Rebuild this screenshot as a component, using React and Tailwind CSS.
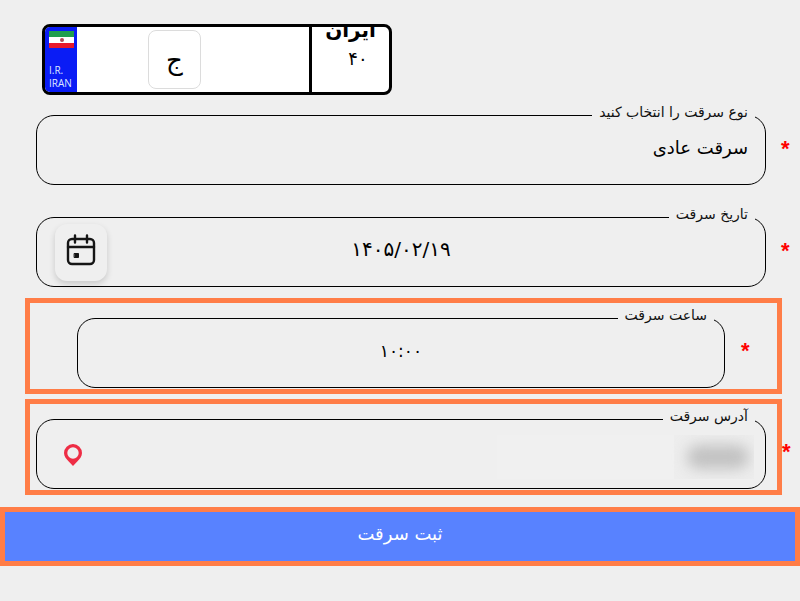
import React from 'react';

const FONT = "font-['DejaVu_Sans',sans-serif]";

function Star({ className = '' }) {
  return <span className={`font-['Liberation_Sans',sans-serif] font-bold text-[22px] leading-none text-[#ff0000] ${className}`}>*</span>;
}

function Field({ label, className = '', children }) {
  return (
    <fieldset dir="rtl" className={`border border-black rounded-[18px] min-w-0 ${className}`}>
      <legend className="ml-0 mr-[10px] px-[7px] h-5 text-[14px] leading-[14px] text-[#111]">{label}</legend>
      {children}
    </fieldset>
  );
}

function Plate() {
  return (
    <div dir="ltr" className="ml-[42px] w-[350px] h-[71px] flex overflow-hidden rounded-lg border-[3px] border-black bg-white">
      <div className="w-[32px] shrink-0 bg-[#0a1cf5] flex flex-col pl-[4px] pt-[4px]">
        <div className="w-[25px] h-[17px] flex flex-col">
          <div className="h-[6px] bg-[#1f9e4d]" />
          <div className="h-[6px] bg-white flex justify-center items-center">
            <div className="w-[4px] h-[4px] rounded-full bg-[#b04a55]" />
          </div>
          <div className="h-[5px] bg-[#e8192c]" />
        </div>
        <div className="mt-[16px] font-['Open_Sans',sans-serif] text-[10px] leading-[13px] text-[#dfe6ff]">
          <div>I.R.</div>
          <div>IRAN</div>
        </div>
      </div>
      <div className="w-[232px] shrink-0 pl-[71px] pt-[3px]">
        <div className="w-[53px] h-[59px] flex items-center justify-center rounded-lg border border-[#dcdcdc] bg-white pt-[2px] text-[26px] text-black">
          ج
        </div>
      </div>
      <div className="flex-1 border-l-[3px] border-black flex flex-col items-center overflow-hidden">
        <div className="-mt-[9px] h-[24px] font-bold text-[20px] leading-6 tracking-[5px] text-black">ایران</div>
        <div className="mt-[7px] pl-[15px] text-[18px] leading-5 text-black">۴۰</div>
      </div>
    </div>
  );
}

function CalendarIcon() {
  return (
    <svg width="30" height="32" viewBox="0 0 30 32" fill="none" stroke="#151515" strokeWidth="2.4" strokeLinecap="round" strokeLinejoin="round">
      <rect x="2" y="5" width="26" height="25" rx="4" />
      <path d="M2 13h26M9 1.500v7M21 1.500v7" />
      <rect x="8.500" y="19.500" width="4" height="4" fill="#151515" strokeWidth="1" />
    </svg>
  );
}

function PinIcon() {
  return (
    <svg width="20" height="24" viewBox="0 0 20 24" className="mt-[14px] shrink-0">
      <path
        fillRule="evenodd"
        fill="#ee2d45"
        d="M10 1a9 9 0 0 1 9 9c0 3.600-2.500 6.200-4.500 8.300L10 23l-4.500-4.700C3.500 16.200 1 13.600 1 10a9 9 0 0 1 9-9zm0 3.300a5.700 5.700 0 1 0 0 11.400a5.700 5.700 0 0 0 0-11.400z"
      />
    </svg>
  );
}

export default function App() {
  return (
    <div className={`${FONT} w-[800px] h-[601px] overflow-hidden bg-[#efefef] pt-[24px]`}>
      <Plate />

      <div className="mt-[10px] flex items-center pl-[36px]">
        <Field label="نوع سرقت را انتخاب کنید" className="w-[730px] h-[80px]">
          <div className="pr-[17px] pt-[9px] text-[18px] leading-7 text-black">سرقت عادی</div>
        </Field>
        <Star className="ml-[15px] mt-[8px]" />
      </div>

      <div className="mt-[22px] flex items-center pl-[36px]">
        <Field label="تاریخ سرقت" className="w-[730px] h-[80px]">
          <div dir="ltr" className="flex items-start pl-[18px]">
            <div className="w-[52px] h-[57px] -mt-[3px] pb-[5px] shrink-0 flex items-center justify-center rounded-xl bg-[#efefef] shadow-[0_3px_6px_rgba(0,0,0,0.16)]">
              <CalendarIcon />
            </div>
            <div className="flex-1 pr-[70px] pt-[8px] text-center text-[20px] leading-7 text-black">۱۴۰۵/۰۲/۱۹</div>
          </div>
        </Field>
        <Star className="ml-[15px] mt-[8px]" />
      </div>

      <div className="mt-[11px] ml-[25px] w-[757px] h-[96px] flex items-start border-[5px] border-[#ff7d47] pt-[5px] pl-[47px]">
        <Field label="ساعت سرقت" className="w-[648px] h-[80px]">
          <div className="pt-[9px] text-center text-[17px] leading-7 text-black">۱۰:۰۰</div>
        </Field>
        <Star className="ml-[16px] mt-[32px]" />
      </div>

      <div className="mt-[5px] flex items-start">
        <div className="ml-[25px] w-[757px] h-[96px] border-[5px] border-[#ff7d47] pt-[5px] pl-[6px]">
          <Field label="آدرس سرقت" className="w-[730px] h-[80px]">
            <div dir="ltr" className="flex items-start pl-[26px]">
              <PinIcon />
              <div className="ml-[414px] mt-[6px] w-[257px] h-[44px] flex overflow-hidden bg-[#f0f0f0]">
                <div className="ml-auto w-[80px] h-full pl-[8px] flex items-center justify-center bg-[#ededed]">
                  <div className="w-[62px] h-[24px] rounded-full bg-[#c2c2c2] blur-[7px]" />
                </div>
              </div>
            </div>
          </Field>
        </div>
        <Star className="mt-[42px]" />
      </div>

      <div className="mt-[12px] h-[59px] flex items-center justify-center border-[5px] border-[#ff7d47] bg-[#5882ff] pb-[6px] text-[18px] text-white">
        ثبت سرقت
      </div>
    </div>
  );
}
